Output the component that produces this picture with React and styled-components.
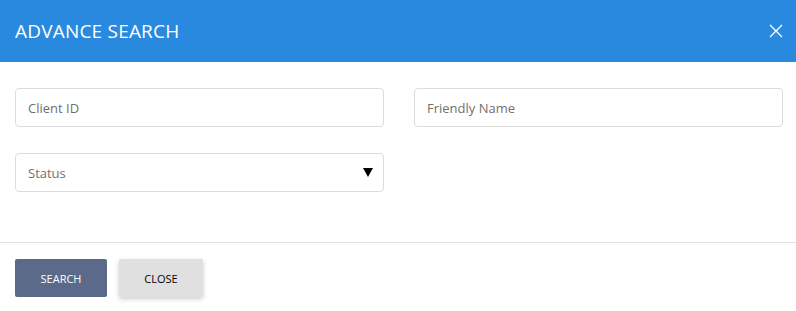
import React from "react";
import styled, { createGlobalStyle } from "styled-components";

const GlobalStyle = createGlobalStyle`
  html, body {
    margin: 0;
    padding: 0;
    background: #ffffff;
    font-family: "Open Sans", "Noto Sans", sans-serif;
  }
  * {
    box-sizing: border-box;
  }
`;

const Modal = styled.div`
  width: 796px;
  height: 311px;
  background: #ffffff;
  display: flex;
  flex-direction: column;
`;

const Header = styled.div`
  height: 62px;
  background-color: #2989de;
  display: flex;
  align-items: center;
  justify-content: space-between;
  padding: 0 12px 0 15px;
`;

const Title = styled.h4`
  margin: 0;
  font-size: 19px;
  font-weight: 400;
  color: #ffffff;
  letter-spacing: 0.2px;
`;

const CloseIcon = styled.button`
  border: 0;
  background: none;
  padding: 0;
  width: 16px;
  height: 16px;
  display: flex;
  cursor: pointer;
`;

const Body = styled.div`
  padding: 26px 13px 0 15px;
  height: 180px;
  display: grid;
  grid-template-columns: 369px 369px;
  column-gap: 30px;
  row-gap: 26px;
  align-content: start;
`;

const Field = styled.div`
  position: relative;
  height: 39px;
`;

const Input = styled.input`
  width: 100%;
  height: 39px;
  border: 1px solid #dcdcdc;
  border-radius: 4px;
  padding: 0 12px;
  font-family: inherit;
  font-size: 13px;
  color: #333;
  outline: none;
  &::placeholder {
    color: #6f6f6f;
  }
`;

const Select = styled.div`
  height: 39px;
  border: 1px solid #dcdcdc;
  border-radius: 4px;
  padding: 0 12px;
  display: flex;
  align-items: center;
  justify-content: space-between;
  font-size: 13px;
  color: #6f6f6f;
`;

const Caret = styled.span`
  width: 0;
  height: 0;
  border-left: 5px solid transparent;
  border-right: 5px solid transparent;
  border-top: 9px solid #000;
  margin-right: -2px;
`;

const Footer = styled.div`
  border-top: 1px solid #e2e2e2;
  padding: 16px 15px 0;
  display: flex;
  gap: 12px;
`;

const Button = styled.button`
  height: 38px;
  padding: 0;
  width: ${({ $w }) => $w}px;
  border: 0;
  border-radius: 2px;
  font-family: inherit;
  font-size: 11px;
  text-transform: uppercase;
  cursor: pointer;
  background: ${({ $primary }) => ($primary ? "#5a6a88" : "#e0e0e0")};
  color: ${({ $primary }) => ($primary ? "#ffffff" : "#000000")};
  box-shadow: ${({ $primary }) =>
    $primary ? "none" : "0 2px 5px rgba(0, 0, 0, 0.2)"};
`;

export default function App() {
  return (
    <>
      <GlobalStyle />
      <Modal>
        <Header>
          <Title>ADVANCE SEARCH</Title>
          <CloseIcon aria-label="close">
            <svg width="16" height="16" viewBox="0 0 16 16">
              <path
                d="M2 2 L14 14 M14 2 L2 14"
                stroke="#ffffff"
                strokeWidth="1.3"
                fill="none"
              />
            </svg>
          </CloseIcon>
        </Header>
        <Body>
          <Field>
            <Input placeholder="Client ID" />
          </Field>
          <Field>
            <Input placeholder="Friendly Name" />
          </Field>
          <Field>
            <Select>
              Status
              <Caret />
            </Select>
          </Field>
        </Body>
        <Footer>
          <Button $primary $w={92}>
            Search
          </Button>
          <Button $w={84}>Close</Button>
        </Footer>
      </Modal>
    </>
  );
}
